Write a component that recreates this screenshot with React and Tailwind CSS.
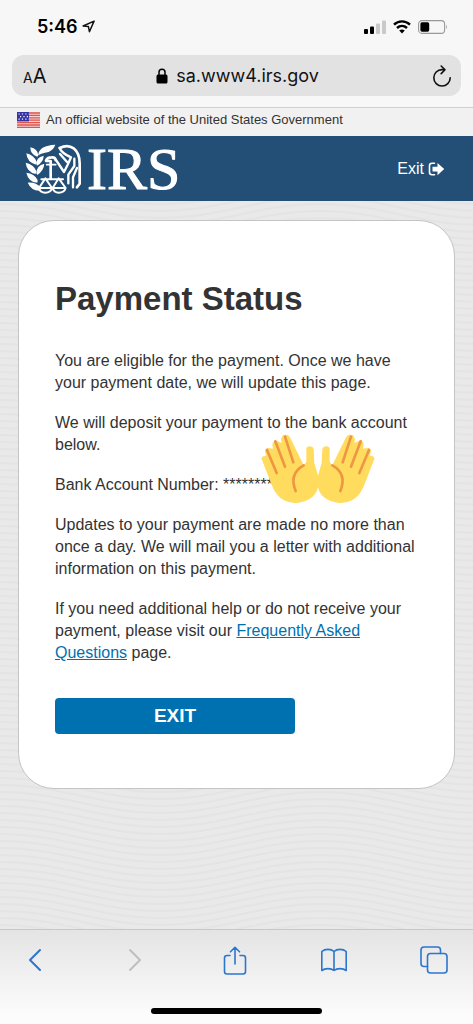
import React from "react";

function Waves() {
  return (
    <svg className="absolute inset-0 h-full w-full" aria-hidden="true">
      <defs>
        <pattern id="waves" width="320" height="7" patternUnits="userSpaceOnUse">
          <rect width="320" height="7" fill="#e9e9e9" />
          <path
            d="M0 -11 C60 -11 100 10 160 10 S260 -11 320 -11 M0 -4 C60 -4 100 17 160 17 S260 -4 320 -4 M0 3 C60 3 100 24 160 24 S260 3 320 3 M0 -18 C60 -18 100 3 160 3 S260 -18 320 -18"
            fill="none"
            stroke="#e4e4e4"
            strokeWidth="2"
          />
        </pattern>
      </defs>
      <rect width="100%" height="100%" fill="url(#waves)" />
    </svg>
  );
}

function StatusBar() {
  return (
    <div className="flex h-[53px] items-center justify-between pl-[37px] pr-[25px]">
      <div className="flex items-center gap-1">
        <span className="font-['Inter',sans-serif] text-lg font-semibold text-black">5:46</span>
        <svg className="h-[13px] w-[13px]" viewBox="0 0 14 14" fill="none" stroke="#111" strokeWidth="1.6" strokeLinejoin="round">
          <path d="M13 1.2 1.2 6.5 6.9 7.1 8 12.6Z" />
        </svg>
      </div>
      <div className="flex items-center gap-[7px]">
        <svg className="h-[14px] w-[22px]" viewBox="0 0 22 14">
          <rect x="0" y="9" width="4" height="5" rx="1" />
          <rect x="6" y="6.5" width="4" height="7.5" rx="1" />
          <rect x="12" y="3.5" width="4" height="10.5" rx="1" fill="#c9c9c9" />
          <rect x="18" y="0.5" width="4" height="13.5" rx="1" fill="#c9c9c9" />
        </svg>
        <svg className="h-[14px] w-[18px]" viewBox="0 0 18 14" fill="none" stroke="#000" strokeWidth="2.4">
          <path d="M1 4.7C5.5.3 12.5.3 17 4.7M4 8C7 5.2 11 5.2 14 8" />
          <path d="M6.2 10.6Q9 8.2 11.8 10.6L9 13.6Z" fill="#000" stroke="none" />
        </svg>
        <svg className="h-[14px] w-[30px]" viewBox="0 0 30 14">
          <rect x=".6" y=".6" width="26" height="12.8" rx="3.4" fill="none" stroke="#999" strokeWidth="1.1" />
          <rect x="2.4" y="2.3" width="8.8" height="9.4" rx="1.6" />
          <path d="M28.2 4.8Q30 7 28.2 9.2Z" fill="#999" />
        </svg>
      </div>
    </div>
  );
}

function AddressBar() {
  return (
    <div className="mx-3 mt-0.5 mb-[11px] flex h-[41px] items-center justify-between rounded-xl bg-[#e2e2e3] pl-[11px] pr-[9px] font-['Inter',sans-serif] text-[#111]">
      <button aria-label="Page settings" className="flex w-8 items-baseline">
        <span className="text-sm">A</span>
        <span className="text-xl">A</span>
      </button>
      <div className="flex items-center gap-2">
        <svg className="h-[16px] w-[12px]" viewBox="0 0 12 16">
          <rect x=".5" y="6.5" width="11" height="9" rx="1.5" />
          <path d="M3 7V4.2a3 3 0 0 1 6 0V7" fill="none" stroke="#000" strokeWidth="1.5" />
        </svg>
        <span className="text-lg">sa.www4.irs.gov</span>
      </div>
      <button aria-label="Reload" className="flex w-8 justify-end">
        <svg className="h-[22px] w-[20px]" viewBox="0 0 20 22" fill="none" stroke="#111" strokeWidth="1.6" strokeLinecap="round" strokeLinejoin="round">
          <path d="M12.6 4.6H10a8.2 8.2 0 1 0 8.2 8.2M9.2 1 13 4.7 9.2 8.6" />
        </svg>
      </button>
    </div>
  );
}

function Flag() {
  return (
    <svg className="h-[16px] w-[23px]" viewBox="0 0 23 16">
      <rect width="23" height="16" fill="#f6d5d3" />
      <path d="M0 1H23M0 3.4H23M0 5.8H23M0 8.2H23M0 10.6H23M0 13H23M0 15.4H23" stroke="#e0544f" strokeWidth="1.3" />
      <rect width="12" height="9.4" fill="#3434a8" />
      <path d="M1.5 2H12M3 4.6H12M1.5 7.2H12" stroke="#fff" strokeWidth="1.2" strokeDasharray="1.2 2.2" />
    </svg>
  );
}

function Eagle() {
  return (
    <svg className="h-[50px] w-[56px]" viewBox="0 0 168 150" fill="#fff" aria-hidden="true">
      <path d="M40 30Q44 5 91 2Q84 23 60 26Q48 28 40 34ZM37 38Q16 32 16 10Q38 14 40 34ZM34 62Q6 56 4 28Q28 34 35 54ZM32 90Q5 84 2 56Q28 62 34 82ZM37 116Q10 114 4 86Q28 88 38 108ZM46 140Q20 142 8 116Q34 114 46 130ZM35 60Q32 40 56 35Q56 54 36 65ZM34 88Q34 65 58 59Q57 78 37 93Z" />
      <g fill="none" stroke="#fff" strokeWidth="8" strokeLinejoin="round" strokeLinecap="round">
        <path d="M63 50Q66 40 80 40Q91 39 92 48M63 51H77V104" />
        <path d="M65 62H92" strokeWidth="5" />
        <path d="M104 12Q128 0 146 13Q164 28 164 58V119L156 130" />
        <path d="M104 12Q110 28 138 40L128 62 117 84 93 48 M105 30 126 54" strokeWidth="7" />
        <path d="M148 44V66L130 92V118M156 72 144 100V130" strokeWidth="7" />
        <path d="M49 106H114M61 103 42 132H81ZM101 103 83 132H122ZM42 132Q45 146 61 146Q77 146 81 132M83 132Q87 146 101 146Q118 146 122 132" strokeWidth="6" />
      </g>
    </svg>
  );
}

function Hand() {
  return (
    <>
      <path
        d="M2 75Q1 66 12 66L16 64L12 54Q12 43 22 42L36 44L34 32Q35 20 46 20L62 27L60 16Q63 1 74 2Q83 1 88 12L128 94L136 84V45Q137 37 146 37Q156 37 158 46L160 86L171 125V160Q166 184 144 196Q103 217 69 199Q46 186 33 155Z"
        fill="#ffdc5d"
      />
      <path d="M128 94Q83 119 104 171M18 48 47 117M43 22 72 98M72 8 97 85" fill="none" stroke="#ef9645" strokeWidth="8" strokeLinecap="round" />
    </>
  );
}

function Hands() {
  return (
    <svg className="absolute -top-10 left-full h-[70px] w-[114px] -translate-x-3" viewBox="0 0 342 210" role="img" aria-label="Open hands">
      <Hand />
      <g transform="translate(342 0) scale(-1 1)">
        <Hand />
      </g>
    </svg>
  );
}

function Toolbar() {
  const line = { fill: "none", stroke: "#2c76ce", strokeWidth: 1.6, strokeLinecap: "round", strokeLinejoin: "round" };
  return (
    <footer className="relative border-t border-[#c8c8c9] bg-linear-to-b from-[#e4e4e5] to-[#fcfcfc] to-90%">
      <nav aria-label="Browser" className="flex h-[60px] items-center justify-between pl-5 pr-6">
        <button aria-label="Back" className="flex w-[30px] justify-center">
          <svg className="h-[24px] w-[16px]" viewBox="0 0 16 24" {...line} strokeWidth={2}>
            <path d="M13 2 3 12 13 22" />
          </svg>
        </button>
        <button aria-label="Forward" disabled className="flex w-[30px] justify-center">
          <svg className="h-[24px] w-[16px]" viewBox="0 0 16 24" {...line} stroke="#bfbfc1" strokeWidth={2}>
            <path d="M3 2 13 12 3 22" />
          </svg>
        </button>
        <button aria-label="Share" className="flex w-[30px] justify-center">
          <svg className="h-[29px] w-[24px]" viewBox="0 0 24 29" {...line}>
            <path d="M7 9.5H4Q1.5 9.5 1.5 12V25.5Q1.5 28 4 28H20Q22.5 28 22.5 25.5V12Q22.5 9.5 20 9.5H17M12 18V1.5M7.5 5.8 12 1.3 16.5 5.8" />
          </svg>
        </button>
        <button aria-label="Bookmarks" className="flex w-[30px] justify-center">
          <svg className="h-[24px] w-[28px]" viewBox="0 0 28 24" {...line}>
            <path d="M14 3.5C11 .7 5 .7 1.8 3.5V22.5C5 20 11 20 14 22.5C17 20 23 20 26.2 22.5V3.5C23 .7 17 .7 14 3.5V22.5" />
          </svg>
        </button>
        <button aria-label="Tabs" className="flex w-[30px] justify-center">
          <svg className="h-[28px] w-[28px]" viewBox="0 0 28 28" {...line}>
            <rect x="7.5" y="7.5" width="19.5" height="19.5" rx="3" />
            <path d="M7.5 20.5H4Q1 20.5 1 17.5V4Q1 1 4 1H17.5Q20.5 1 20.5 4V7.5" />
          </svg>
        </button>
      </nav>
      <div className="flex h-[34px] items-end justify-center pb-[10px]">
        <span className="h-[6px] w-[36%] rounded-full bg-black" />
      </div>
    </footer>
  );
}

export default function App() {
  return (
    <div className="flex min-h-screen flex-col font-['Liberation_Sans',Arial,sans-serif] text-[#333]">
      <div className="border-b border-[#d0d0d1] bg-[#f7f7f7]">
        <StatusBar />
        <AddressBar />
      </div>
      <div className="flex h-7 items-center gap-[6px] bg-[#f1f1f1] pb-1 pl-[17px] text-[13px]">
        <Flag />
        <span>An official website of the United States Government</span>
      </div>
      <header className="flex h-[65px] items-center justify-between bg-[#234e76] pl-[25px] pr-7 text-white">
        <div className="flex items-center gap-[6px]">
          <Eagle />
          <span className="font-['Liberation_Serif',serif] text-6xl [-webkit-text-stroke:1px_white]">IRS</span>
        </div>
        <a href="#exit" className="flex items-center gap-1 text-base">
          Exit
          <svg className="h-[14px] w-[17px]" viewBox="0 0 17 14" fill="none" stroke="#fff" strokeWidth="1.6" strokeLinecap="round">
            <path d="M6.5 1.2H4Q1.5 1.2 1.5 3.7V10.3Q1.5 12.8 4 12.8H6.5" />
            <path d="M4.5 4.8H9.5V1L16.2 7.1 9.5 13.2V9.5H4.5Z" fill="#fff" stroke="none" />
          </svg>
        </a>
      </header>
      <main className="relative flex-1 px-[18px] py-[19px]">
        <Waves />
        <section className="relative rounded-[36px] border border-[#c4c4c4] bg-white px-9 pt-[58px] pb-[54px]">
          <h1 className="text-[33px] leading-10 font-bold">Payment Status</h1>
          <div className="mt-[31px] flex flex-col gap-[18px] text-base leading-[22px]">
            <p>You are eligible for the payment. Once we have your payment date, we will update this page.</p>
            <p>We will deposit your payment to the bank account below.</p>
            <p>
              <span className="relative inline-block">
                Bank Account Number: ********
                <Hands />
              </span>
            </p>
            <p>Updates to your payment are made no more than once a day. We will mail you a letter with additional information on this payment.</p>
            <p>
              If you need additional help or do not receive your payment, please visit our{" "}
              <a href="#faq" className="text-[#0071b0] underline">
                Frequently Asked Questions
              </a>{" "}
              page.
            </p>
          </div>
          <button className="mt-[34px] block h-9 w-[240px] rounded-[4px] bg-[#0071b0] text-[19px] font-bold text-white">EXIT</button>
        </section>
      </main>
      <Toolbar />
    </div>
  );
}
